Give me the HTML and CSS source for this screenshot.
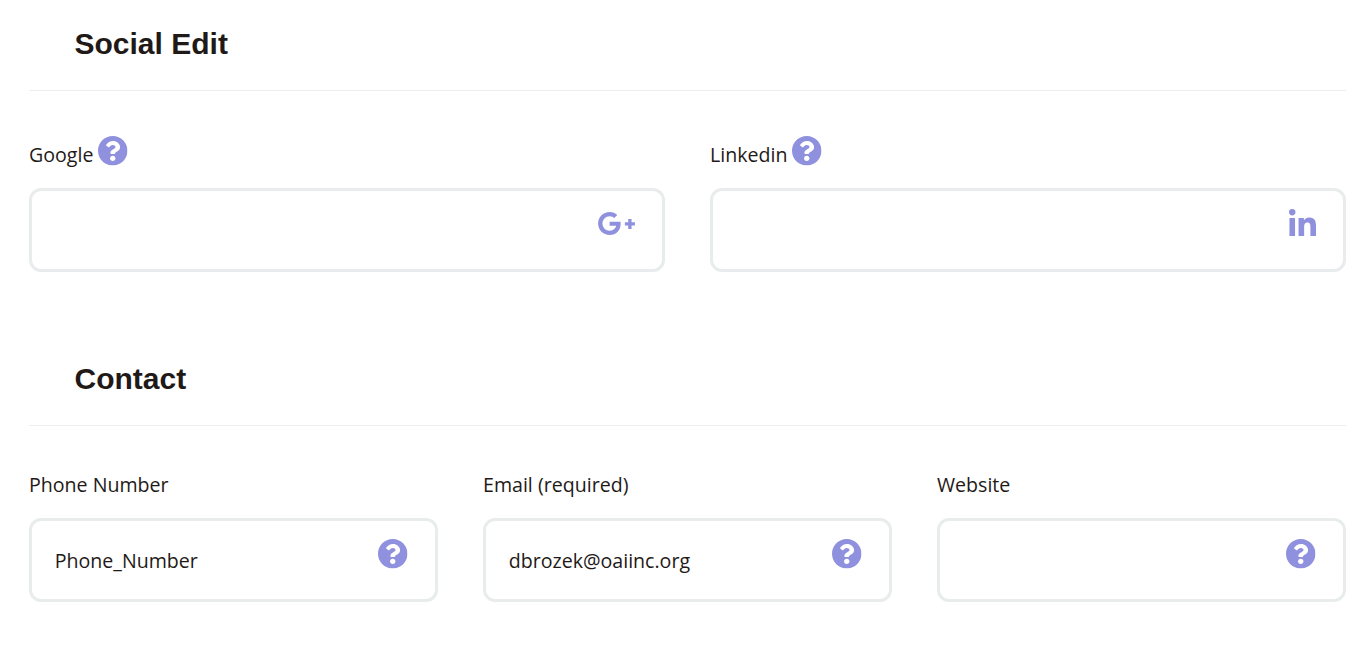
FILE: index.html
```html
<!DOCTYPE html>
<html lang="en">
<head>
<meta charset="utf-8">
<title>Social Edit</title>
<link rel="stylesheet" href="styles.css">
</head>
<body>
<svg class="defs" width="0" height="0" aria-hidden="true">
  <symbol id="q" viewBox="8 8 496 496"><path d="M504 256c0 136.997-111.043 248-248 248S8 392.997 8 256C8 119.083 119.043 8 256 8s248 111.083 248 248zM262.655 90c-54.497 0-89.255 22.957-116.549 63.758-3.536 5.286-2.353 12.415 2.715 16.258l34.699 26.31c5.205 3.947 12.621 3.008 16.665-2.122 17.864-22.658 30.113-35.797 57.303-35.797 20.429 0 45.698 13.148 45.698 32.958 0 14.976-12.363 22.667-32.534 33.976C247.128 238.528 216 254.941 216 296v4c0 6.627 5.373 12 12 12h56c6.627 0 12-5.373 12-12v-1.333c0-28.462 83.186-29.647 83.186-106.667 0-58.002-60.165-102-116.531-102zM256 338c-25.365 0-46 20.635-46 46 0 25.364 20.635 46 46 46s46-20.636 46-46c0-25.365-20.635-46-46-46z"/></symbol>
</svg>
<main class="page">
  <section class="section section-social">
    <h2 class="title">Social Edit</h2>
    <div class="grid two">
      <div class="field">
        <div class="label"><span class="label-text">Google</span><svg class="icon q-label"><use href="#q"/></svg></div>
        <div class="box">
          <input class="input" type="text" aria-label="Google">
          <svg class="icon gplus" viewBox="12 64 616 384"><path d="M386.061 228.496c1.834 9.692 3.143 19.384 3.143 31.956C389.204 370.205 315.599 448 204.8 448c-106.084 0-192-85.915-192-192s85.916-192 192-192c51.864 0 95.083 18.859 128.611 50.292l-52.126 50.03c-14.145-13.621-39.028-29.599-76.485-29.599-65.484 0-118.92 54.221-118.92 121.277 0 67.056 53.436 121.277 118.92 121.277 75.961 0 104.513-54.745 108.965-82.773H204.8v-66.009h181.261zm185.406 6.437V179.2h-56.001v55.733h-55.733v56.001h55.733v55.733h56.001v-55.733H627.2v-56.001h-55.733z"/></svg>
        </div>
      </div>
      <div class="field">
        <div class="label"><span class="label-text">Linkedin</span><svg class="icon q-label"><use href="#q"/></svg></div>
        <div class="box">
          <input class="input" type="text" aria-label="Linkedin">
          <svg class="icon linkedin" viewBox="0 0 448 448"><path d="M100.28 448H7.4V148.9h92.88zM53.79 108.1C24.09 108.1 0 83.5 0 53.8a53.79 53.79 0 0 1 107.58 0c0 29.7-24.1 54.3-53.79 54.3zM447.9 448h-92.68V302.4c0-34.7-.7-79.2-48.29-79.2-48.29 0-55.69 37.7-55.69 76.7V448h-92.78V148.9h89.08v40.8h1.3c12.4-23.1 42.69-48.3 87.88-48.3 94 0 111.28 61.9 111.28 142.3V448z"/></svg>
        </div>
      </div>
    </div>
  </section>
  <section class="section">
    <h2 class="title">Contact</h2>
    <div class="grid three">
      <div class="field">
        <div class="label"><span class="label-text">Phone Number</span></div>
        <div class="box">
          <input class="input" type="text" value="Phone_Number" aria-label="Phone Number">
          <svg class="icon q-input"><use href="#q"/></svg>
        </div>
      </div>
      <div class="field">
        <div class="label"><span class="label-text">Email (required)</span></div>
        <div class="box">
          <input class="input" type="text" value="dbrozek@oaiinc.org" aria-label="Email">
          <svg class="icon q-input"><use href="#q"/></svg>
        </div>
      </div>
      <div class="field">
        <div class="label"><span class="label-text">Website</span></div>
        <div class="box">
          <input class="input" type="text" aria-label="Website">
          <svg class="icon q-input"><use href="#q"/></svg>
        </div>
      </div>
    </div>
  </section>
</main>
</body>
</html>
```
FILE: styles.css
```css
* { box-sizing: border-box; }
html, body { margin: 0; padding: 0; background: #fff; }
body {
  font-family: "Open Sans", sans-serif;
  color: #1f1a17;
  overflow: hidden;
}
.defs { position: absolute; }
.page { padding: 0 21px 0 29px; }
.section-social { margin-bottom: 63px; }
.title {
  margin: 0;
  height: 91px;
  padding: 26px 0 0 45.5px;
  font: bold 30px/36px "Liberation Sans", Arial, sans-serif;
  color: #1f1a17;
  border-bottom: 1px solid #eceeee;
}
.grid { display: grid; column-gap: 45px; padding-top: 45px; }
.two { grid-template-columns: 1fr 1fr; }
.three { grid-template-columns: 1fr 1fr 1fr; }
.label {
  display: flex;
  gap: 5px;
  font-size: 19.6px;
  line-height: 27px;
  margin-bottom: 20px;
}
.section-social .label-text { margin-top: 5px; }
.icon { fill: #8f91de; display: block; }
.q-label { width: 29.5px; height: 29.5px; }
.section-social .label { height: 32px; }
.box { position: relative; height: 84px; }
.input {
  display: block;
  width: 100%;
  height: 100%;
  border: 3px solid #e9ecec;
  border-radius: 12px;
  padding: 1px 70px 0 22.7px;
  font: 19.6px "Open Sans", sans-serif;
  color: #1f1a17;
  background: #fff;
  outline: none;
}
.q-input { position: absolute; top: 21px; right: 30.5px; width: 29.5px; height: 29.5px; }
.gplus { position: absolute; top: 24px; right: 30.5px; width: 37px; height: 23px; }
.linkedin { position: absolute; top: 21px; right: 30px; width: 27px; height: 27px; }
```
